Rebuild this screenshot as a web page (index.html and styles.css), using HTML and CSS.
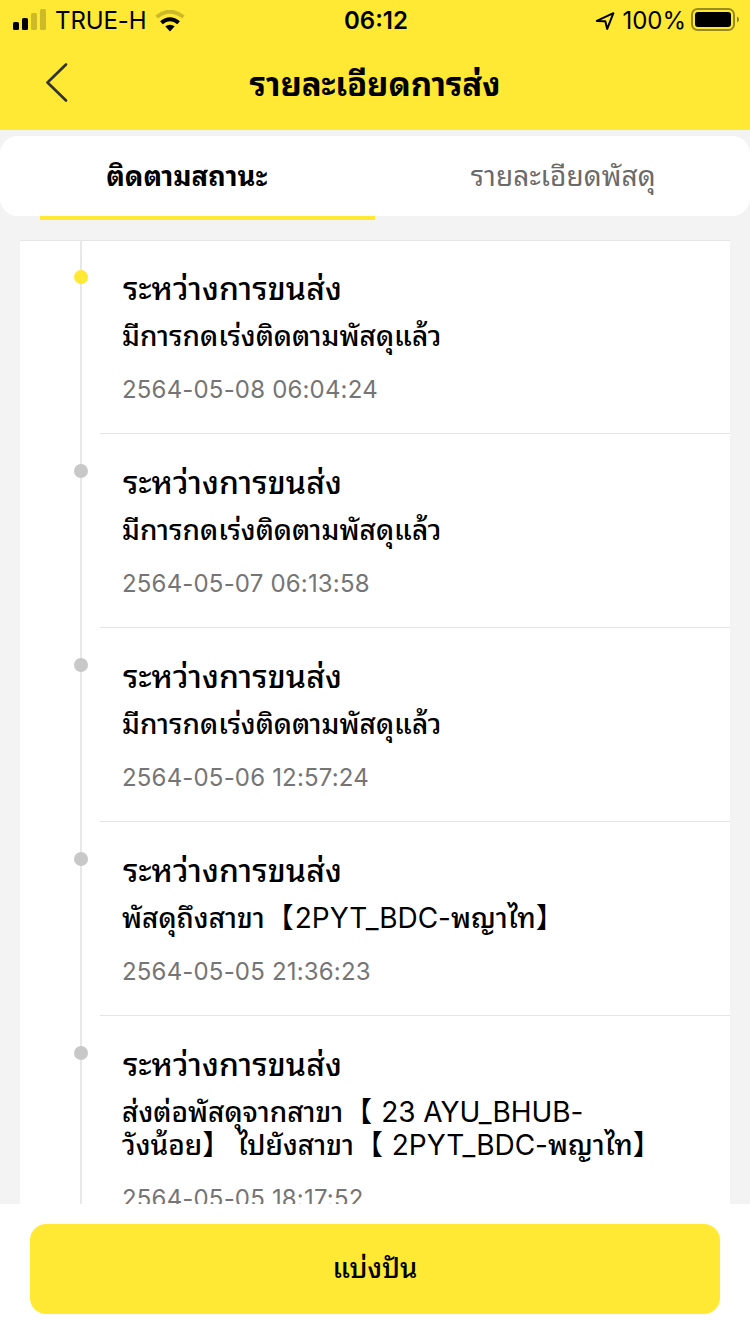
FILE: index.html
```html
<!DOCTYPE html>
<html lang="th">
<head>
<meta charset="utf-8">
<title>รายละเอียดการส่ง</title>
<link rel="stylesheet" href="styles.css">
</head>
<body>
<div class="screen">
  <header class="top">
    <div class="status">
      <div class="status-left">
        <svg class="signal" width="34" height="22" viewBox="0 0 34 22">
          <rect x="0" y="13" width="6" height="8" rx="1.5"/>
          <rect x="9" y="9" width="6" height="12" rx="1.5"/>
          <rect class="dim" x="18" y="4" width="6" height="17" rx="1.5"/>
          <rect class="dim" x="27" y="0" width="6" height="21" rx="1.5"/>
        </svg>
        <span class="carrier">TRUE-H</span>
        <svg class="wifi" width="30" height="22" viewBox="0 0 30 22">
          <path class="dim-stroke" d="M1.6 7Q15-3.6 28.4 7"/>
          <path class="arc" d="M6.4 12.8Q15 5.6 23.6 12.8"/>
          <path d="M10.3 16.3Q15 13 19.7 16.3L15 21.5Z"/>
        </svg>
      </div>
      <span class="clock">06:12</span>
      <div class="status-right">
        <svg class="locate" width="20" height="20" viewBox="0 0 20 20"><path d="M1.8 9.9 18.4 2.2 12.2 17.9 10.3 10.3Z"/></svg>
        <span class="percent">100%</span>
        <svg class="battery" width="48" height="24" viewBox="0 0 48 24">
          <rect class="shell" x="1" y="1" width="42" height="21" rx="5.5"/>
          <rect x="4" y="4" width="36" height="15" rx="3"/>
          <path class="tip" d="M46 8.5q2 1 2 3t-2 3z"/>
        </svg>
      </div>
    </div>
    <div class="nav">
      <svg class="back" width="24" height="42" viewBox="0 0 24 42"><path d="M21 2.5 2.5 20.5 21 38.5"/></svg>
      <h1 class="title">รายละเอียดการส่ง</h1>
    </div>
  </header>

  <nav class="tabs">
    <div class="tab active"><span class="tab-on">ติดตามสถานะ</span></div>
    <div class="tab"><span class="tab-off">รายละเอียดพัสดุ</span></div>
  </nav>

  <main class="list">
    <article class="item current">
      <div class="rail"><i class="dot"></i></div>
      <div class="body"><h2 class="state">ระหว่างการขนส่ง</h2><p class="note">มีการกดเร่งติดตามพัสดุแล้ว</p><time class="when">2564-05-08 06:04:24</time></div>
    </article>
    <article class="item">
      <div class="rail"><i class="dot"></i></div>
      <div class="body"><h2 class="state">ระหว่างการขนส่ง</h2><p class="note">มีการกดเร่งติดตามพัสดุแล้ว</p><time class="when">2564-05-07 06:13:58</time></div>
    </article>
    <article class="item">
      <div class="rail"><i class="dot"></i></div>
      <div class="body"><h2 class="state">ระหว่างการขนส่ง</h2><p class="note">มีการกดเร่งติดตามพัสดุแล้ว</p><time class="when">2564-05-06 12:57:24</time></div>
    </article>
    <article class="item">
      <div class="rail"><i class="dot"></i></div>
      <div class="body"><h2 class="state">ระหว่างการขนส่ง</h2><p class="note">พัสดุถึงสาขา<span class="open">【</span><span class="code">2PYT_BDC-</span>พญาไท<span class="close">】</span></p><time class="when">2564-05-05 21:36:23</time></div>
    </article>
    <article class="item">
      <div class="rail"><i class="dot"></i></div>
      <div class="body"><h2 class="state">ระหว่างการขนส่ง</h2><p class="note">ส่งต่อพัสดุจากสาขา<span class="open">【</span><span class="code"> 23 AYU_BHUB-</span><br>วังน้อย<span class="close">】</span> ไปยังสาขา<span class="open">【</span><span class="code"> 2PYT_BDC-</span>พญาไท<span class="close">】</span></p><time class="when">2564-05-05 18:17:52</time></div>
    </article>
  </main>

  <footer class="bottom"><button class="share">แบ่งปัน</button></footer>
</div>
</body>
</html>
```

FILE: styles.css
```css
* { box-sizing: border-box; margin: 0; }
body { background: #f3f3f3; color: #000; font-family: Inter, "Noto Sans Thai Looped", Loma, "Noto Sans CJK SC", sans-serif; }
.screen { display: flex; flex-direction: column; width: 750px; height: 1334px; overflow: hidden; white-space: nowrap; }

.top { height: 130px; flex: none; background: #ffe934; }
.status { display: grid; grid-template-columns: 1fr auto 1fr; align-items: center; height: 40px; padding: 2px 11px 0 13px; font-size: 24px; line-height: 38px; }
.status-left, .status-right { display: flex; align-items: center; }
.status-right { justify-content: flex-end; }
.signal { margin: -2px 8px 0 0; }
.carrier { font-size: 24px; letter-spacing: -.1px; }
.wifi { margin: -1px 0 0 8px; }
.dim { opacity: .2; }
.dim-stroke, .arc { fill: none; stroke: #000; stroke-width: 4; }
.dim-stroke { opacity: .2; }
.clock { font-weight: 600; }
.locate { margin-right: 7px; }
.locate path { fill: none; stroke: #000; stroke-width: 2; stroke-linejoin: round; }
.percent { margin-right: 5px; }
.battery { margin-top: -2px; }
.shell { fill: none; stroke: #000; stroke-width: 2; opacity: .4; }
.tip { opacity: .45; }
.nav { display: grid; grid-template-columns: 100px 1fr 100px; align-items: center; height: 86px; }
.back { margin-left: 45px; }
.back path { fill: none; stroke: #333; stroke-width: 2.7; stroke-linecap: round; stroke-linejoin: round; }
.title { padding-top: 2px; text-align: center; font-size: 33px; font-weight: 700; line-height: 60px; letter-spacing: -.1px; }

.tabs { display: flex; flex: none; height: 80px; margin-top: 6px; padding: 0 40px; background: #fff; border-radius: 18px; }
.tab { flex: 1; display: flex; align-items: center; justify-content: center; height: 84px; padding-bottom: 9px; font-size: 28px; color: #6a6a6a; letter-spacing: .1px; }
.tab:last-child { padding-left: 42px; }
.active { color: #000; font-size: 27.4px; font-weight: 700; border-bottom: 4px solid #ffe934; padding: 0 41px 5px 0; }

.list { flex: 1; min-height: 0; overflow: hidden; margin: 24px 20px 0; background: #fff; box-shadow: inset 0 1px #e4e4e4; }
.item { display: grid; grid-template-columns: 80px 1fr; }
.rail { display: flex; justify-content: center; padding: 30px 0 0 42px; background: linear-gradient(#e8e8e8, #e8e8e8) 60px 0 / 2px 100% no-repeat; }
.dot { width: 14px; height: 14px; border-radius: 50%; background: #c8c8c8; }
.current .dot { background: #ffe934; }
.body { padding: 29px 0 28px 22px; border-bottom: 1px solid #e4e4e4; }
.state { padding-left: 1px; font-size: 32px; font-weight: 500; line-height: 40px; letter-spacing: .05px; }
.note { margin-top: 11px; font-size: 28px; font-weight: 500; line-height: 33px; }
.open, .close { font-weight: 400; }
.open { margin: 0 1px; }
.code { font-weight: 400; letter-spacing: -.05px; }
.when { display: block; margin-top: 22px; font-size: 24px; line-height: 30px; letter-spacing: .18px; color: #757575; }

.bottom { flex: none; height: 130px; padding: 20px 30px; background: #fff; }
.share { display: block; width: 100%; height: 90px; padding: 0 0 6px; border: 0; border-radius: 16px; background: #ffe934; color: #000; font: inherit; font-size: 27.5px; font-weight: 500; }
```
